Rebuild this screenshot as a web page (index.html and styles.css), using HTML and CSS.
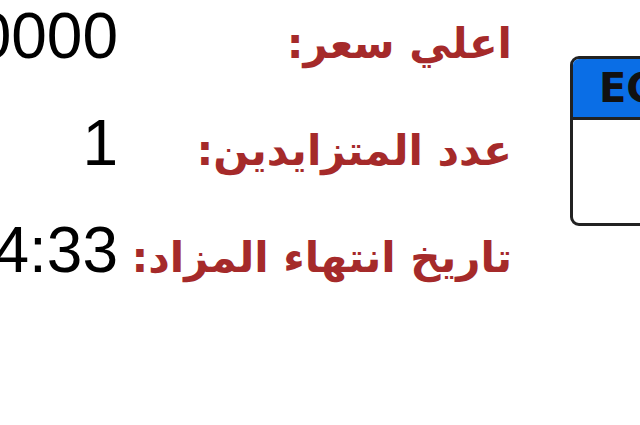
FILE: index.html
```html
<!DOCTYPE html>
<html lang="ar" dir="rtl">
<head>
<meta charset="utf-8">
<link rel="stylesheet" href="styles.css">
</head>
<body>
<div class="page">
  <div class="card">
    <div class="card-head">EGP</div>
    <div class="card-body"></div>
  </div>
  <div class="info">
    <div class="row"><span class="label">اعلي سعر:</span><span class="value">10000</span></div>
    <div class="row"><span class="label">عدد المتزايدين:</span><span class="value">1</span></div>
    <div class="row"><span class="label">تاريخ انتهاء المزاد:</span><span class="value">2024-05-12 14:33</span></div>
  </div>
</div>
</body>
</html>
```
FILE: styles.css
```css
html, body {
  margin: 0;
  padding: 0;
  background: #fff;
  overflow: hidden;
}
body {
  width: 640px;
  height: 425px;
  direction: rtl;
}
.page {
  display: flex;
  flex-direction: row;
  align-items: flex-start;
  gap: 58px;
  margin-right: -140px;
}
.card {
  flex: none;
  width: 204px;
  margin-top: 56px;
  border: 3px solid #222;
  border-radius: 9px;
  overflow: hidden;
  background: #fff;
}
.card-head {
  background: #0a6ee6;
  border-bottom: 3px solid #222;
  height: 58px;
  direction: ltr;
  padding-left: 26px;
  font: bold 40px/58px "DejaVu Sans", sans-serif;
  color: #111;
}
.card-body {
  height: 103px;
}
.info {
  flex: none;
  display: flex;
  flex-direction: column;
  padding-top: 4px;
}
.row {
  display: flex;
  flex-direction: row;
  align-items: baseline;
  height: 107px;
  white-space: nowrap;
}
.label {
  font: bold 42px/1 "DejaVu Sans", sans-serif;
  color: #a52a2a;
  width: 394px;
  flex: none;
  text-align: right;
}
.value {
  font: 64px/1 "Liberation Sans", Arial, sans-serif;
  color: #000;
  direction: ltr;
}
```
